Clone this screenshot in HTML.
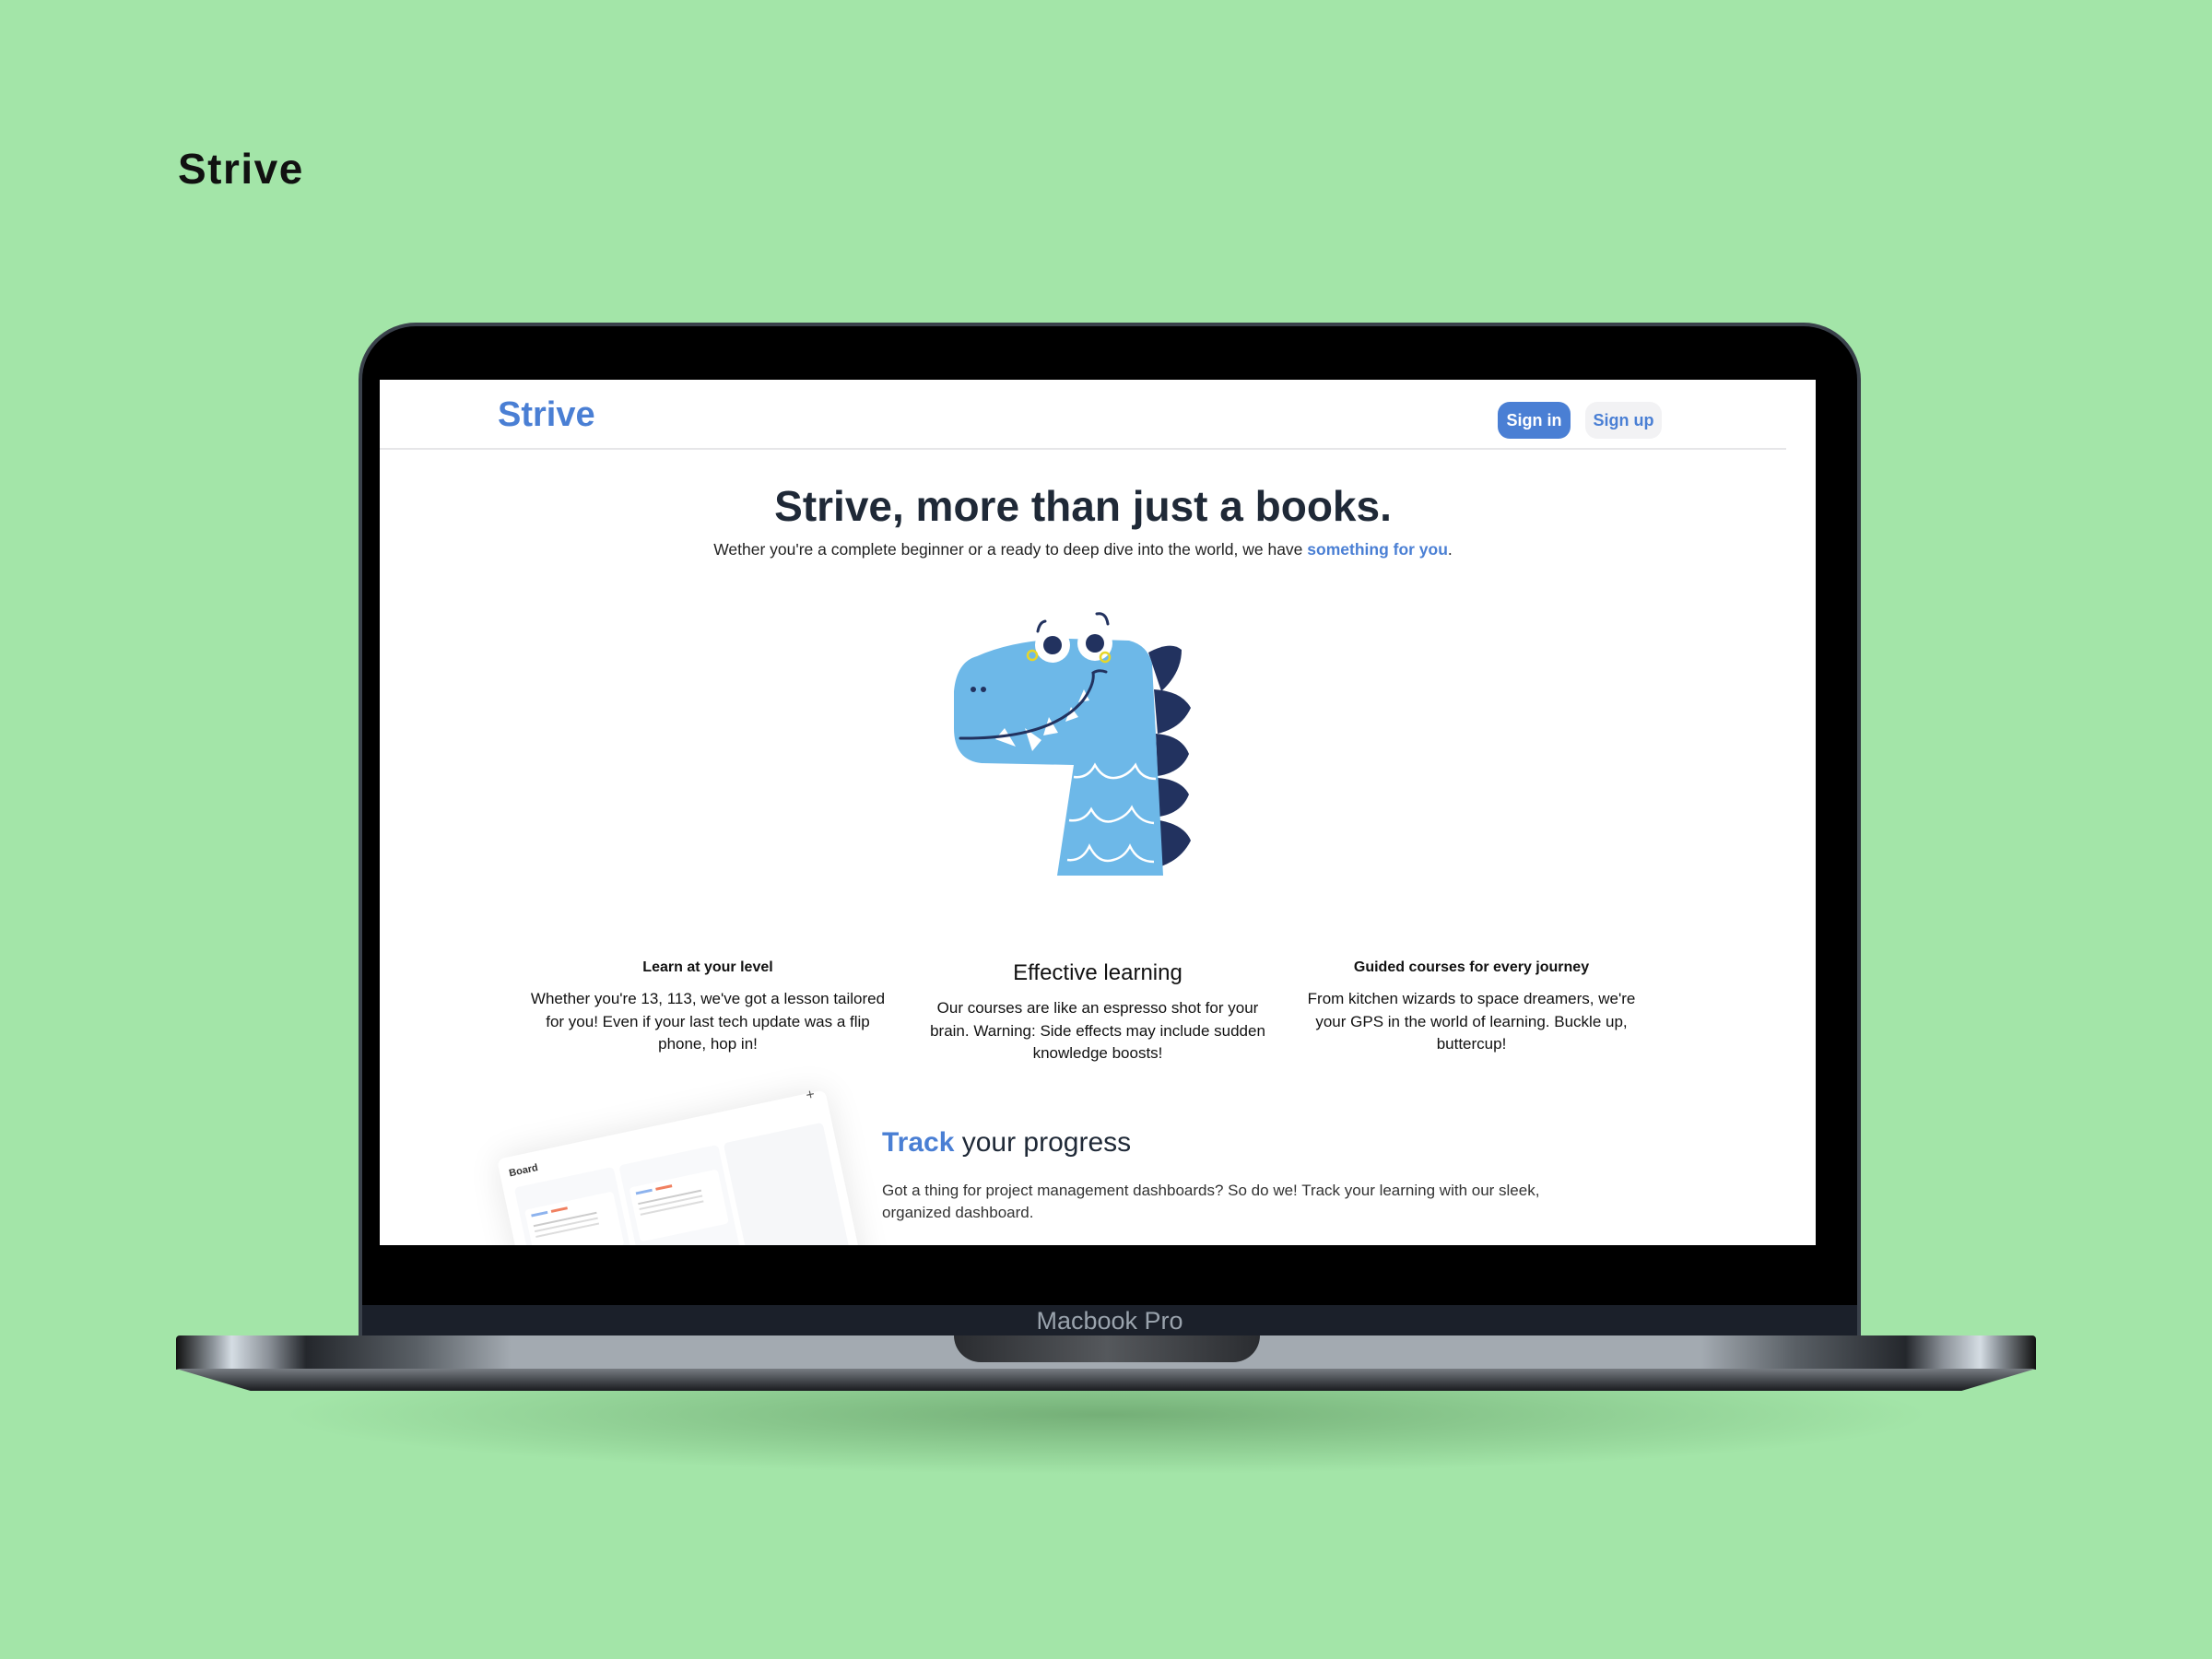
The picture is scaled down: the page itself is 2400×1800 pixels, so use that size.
<!DOCTYPE html>
<html><head><meta charset="utf-8"><style>
*{margin:0;padding:0;box-sizing:border-box}
body{width:2400px;height:1800px;background:#a3e5a8;position:relative;overflow:hidden;font-family:"Liberation Sans",sans-serif}
.abs{position:absolute}
#title{left:193px;top:156px;font-size:46px;font-weight:700;letter-spacing:1.5px;color:#111}
#shadow{left:300px;top:1470px;width:1800px;height:130px;border-radius:50%;background:radial-gradient(ellipse at center,rgba(60,110,60,.45),rgba(60,110,60,0) 70%)}
#bezel{left:389px;top:350px;width:1630px;height:1100px;background:#000;border:4px solid #3a414b;border-bottom:none;border-radius:62px 62px 0 0}
#chin{left:393px;top:1416px;width:1622px;height:34px;background:#1b202a;color:#9aa3ad;font-size:27px;text-align:center;line-height:34px}
#screen{left:412px;top:412px;width:1558px;height:939px;background:#fff;overflow:hidden}
#base{left:191px;top:1449px;width:2018px;height:37px;border-radius:4px 4px 0 0;background:linear-gradient(90deg,#111 0%,#8d949b 2%,#d5dde4 3%,#8a9097 5%,#24272c 7%,#5a6066 13%,#a3aab1 18%,#a3aab1 82%,#5a6066 87%,#24272c 93%,#8a9097 95%,#d5dde4 97%,#8d949b 98%,#111 100%)}
#base2{left:191px;top:1485px;width:2018px;height:24px;background:linear-gradient(#777c82,#1a1c20);clip-path:polygon(0 0,100% 0,96% 100%,4% 100%)}
#notch{left:1035px;top:1449px;width:332px;height:29px;border-radius:0 0 30px 30px;background:linear-gradient(90deg,#2a2c30,#55585c 50%,#2a2c30)}
.s{position:absolute}
.logo{left:128px;top:17px;font-size:38px;font-weight:700;color:#4a7fd4}
.btn{top:24px;height:40px;border-radius:13px;font-size:18px;font-weight:700;line-height:40px;text-align:center}
.hl{left:0;width:1526px;top:110px;text-align:center;font-size:46px;font-weight:700;color:#1f2937}
.sub{left:0;width:1526px;top:174px;text-align:center;font-size:17.5px;color:#222}
.ft{text-align:center;color:#111}
.ft h3{font-size:16px;font-weight:700;line-height:24px}
.ft p{font-size:17px;line-height:24.5px;margin-top:10px}
</style></head><body>
<div id="title" class="abs">Strive</div>
<div id="shadow" class="abs"></div>
<div id="bezel" class="abs"></div>
<div id="chin" class="abs">Macbook Pro</div>
<div id="screen" class="abs">
  <div class="s logo">Strive</div>
  <div class="s btn" style="left:1213px;width:79px;background:#4a7fd4;color:#fff">Sign in</div>
  <div class="s btn" style="left:1308px;width:83px;background:#f2f2f4;color:#4a7fd4">Sign up</div>
  <div class="s" style="left:0;top:74px;width:1526px;height:2px;background:#e6e6e8"></div>
  <div class="s hl">Strive, more than just a books.</div>
  <div class="s sub">Wether you're a complete beginner or a ready to deep dive into the world, we have <b style="color:#4a7fd4">something for you</b>.</div>
  <svg class="s" style="left:608px;top:238px" width="300" height="310" viewBox="0 0 300 310">
    <g fill="#22325f">
      <path d="M226,58 Q250,45 262,55 Q262,80 240,100 Z"/>
      <path d="M232,98 Q262,100 272,118 Q262,140 236,146 Z"/>
      <path d="M234,146 Q262,148 270,168 Q262,188 236,192 Z"/>
      <path d="M236,194 Q262,196 270,212 Q262,232 238,236 Z"/>
      <path d="M238,240 Q265,245 272,262 Q262,282 240,290 Z"/>
    </g>
    <path d="M40,62 Q80,44 140,43 L205,45 Q225,50 230,70 L242,300 L127,300 L145,180 L45,178 Q15,175 15,140 L15,100 Q18,68 40,62 Z" fill="#6db8e8"/>
    <g fill="#fff">
      <path d="M70,140 L82,160 L60,152 Z"/><path d="M92,140 L100,165 L110,153 Z"/>
      <path d="M118,128 L128,145 L112,148 Z"/><path d="M142,117 L150,128 L136,133 Z"/><path d="M156,98 L162,110 L150,112 Z"/>
      <circle cx="122" cy="50" r="19"/><circle cx="168" cy="48" r="19"/>
    </g>
    <circle cx="122" cy="50" r="10" fill="#22325f"/><circle cx="168" cy="48" r="10" fill="#22325f"/>
    <circle cx="100" cy="61" r="5" fill="none" stroke="#e6d62a" stroke-width="2.5"/>
    <circle cx="179" cy="63" r="5" fill="none" stroke="#e6d62a" stroke-width="2.5"/>
    <circle cx="36" cy="98" r="3" fill="#22325f"/><circle cx="47" cy="98" r="3" fill="#22325f"/>
    <g fill="none" stroke="#22325f" stroke-width="3" stroke-linecap="round">
      <path d="M22,151 Q120,152 155,110 Q168,92 166,80 Q172,76 180,79"/>
      <path d="M106,35 Q108,25 114,24"/><path d="M170,16 Q180,14 182,27"/>
    </g>
    <g fill="none" stroke="#fff" stroke-width="2.5">
      <path d="M145,193 Q160,195 168,180 Q178,198 195,193 Q205,190 212,180 Q218,195 234,195"/>
      <path d="M140,240 Q156,242 164,228 Q174,246 190,240 Q202,236 208,226 Q216,242 232,243"/>
      <path d="M138,283 Q154,285 162,268 Q172,288 188,283 Q200,280 206,268 Q214,285 232,285"/>
    </g>
  </svg>
  <div class="s ft" style="left:161px;width:390px;top:626px"><h3>Learn at your level</h3><p>Whether you're 13, 113, we've got a lesson tailored for you! Even if your last tech update was a flip phone, hop in!</p></div>
  <div class="s ft" style="left:589px;width:380px;top:628px"><h3 style="font-size:24px;font-weight:500;line-height:32px">Effective learning</h3><p style="margin-top:10px">Our courses are like an espresso shot for your brain. Warning: Side effects may include sudden knowledge boosts!</p></div>
  <div class="s ft" style="left:1002px;width:365px;top:626px"><h3>Guided courses for every journey</h3><p>From kitchen wizards to space dreamers, we're your GPS in the world of learning. Buckle up, buttercup!</p></div>
  <div class="s" style="left:127px;top:846px;width:364px;height:220px;background:#fff;border-radius:8px;box-shadow:0 0 35px rgba(0,0,0,.1);transform:rotate(-12deg);transform-origin:0 0;color:#333">
    <div style="position:absolute;left:10px;top:12px;font-size:11px;font-weight:700">Board</div>
    <div style="position:absolute;right:12px;top:-6px;font-size:16px;color:#555">+</div>
    <div style="position:absolute;left:12px;top:34px;width:110px;height:160px;background:#f8f9fb;border-radius:5px"></div>
    <div style="position:absolute;left:128px;top:34px;width:110px;height:160px;background:#f8f9fb;border-radius:5px"></div>
    <div style="position:absolute;left:244px;top:34px;width:110px;height:180px;background:#f6f7f9;border-radius:5px"></div>
    <div style="position:absolute;left:18px;top:60px;width:98px;height:60px;background:#fff;border-radius:4px"></div>
    <div style="position:absolute;left:134px;top:60px;width:98px;height:60px;background:#fff;border-radius:4px"></div>
    <div style="position:absolute;left:24px;top:66px;width:18px;height:3px;background:#8db3ee"></div><div style="position:absolute;left:46px;top:66px;width:18px;height:3px;background:#f08060"></div>
    <div style="position:absolute;left:140px;top:66px;width:18px;height:3px;background:#8db3ee"></div><div style="position:absolute;left:162px;top:66px;width:18px;height:3px;background:#f08060"></div>
    <div style="position:absolute;left:24px;top:78px;width:70px;height:2px;background:#ccc;box-shadow:0 6px 0 #ddd,0 12px 0 #ddd"></div>
    <div style="position:absolute;left:140px;top:78px;width:70px;height:2px;background:#ccc;box-shadow:0 6px 0 #ddd,0 12px 0 #ddd"></div>
  </div>
  <div class="s" style="left:545px;top:811px;font-size:30px;color:#1f2937"><b style="color:#4a7fd4">Track</b> your progress</div>
  <div class="s" style="left:545px;top:868px;width:780px;font-size:17px;line-height:23.5px;color:#333">Got a thing for project management dashboards? So do we! Track your learning with our sleek, organized dashboard.</div>
</div>
<div id="base" class="abs"></div>
<div id="base2" class="abs"></div>
<div id="notch" class="abs"></div>
</body></html>
